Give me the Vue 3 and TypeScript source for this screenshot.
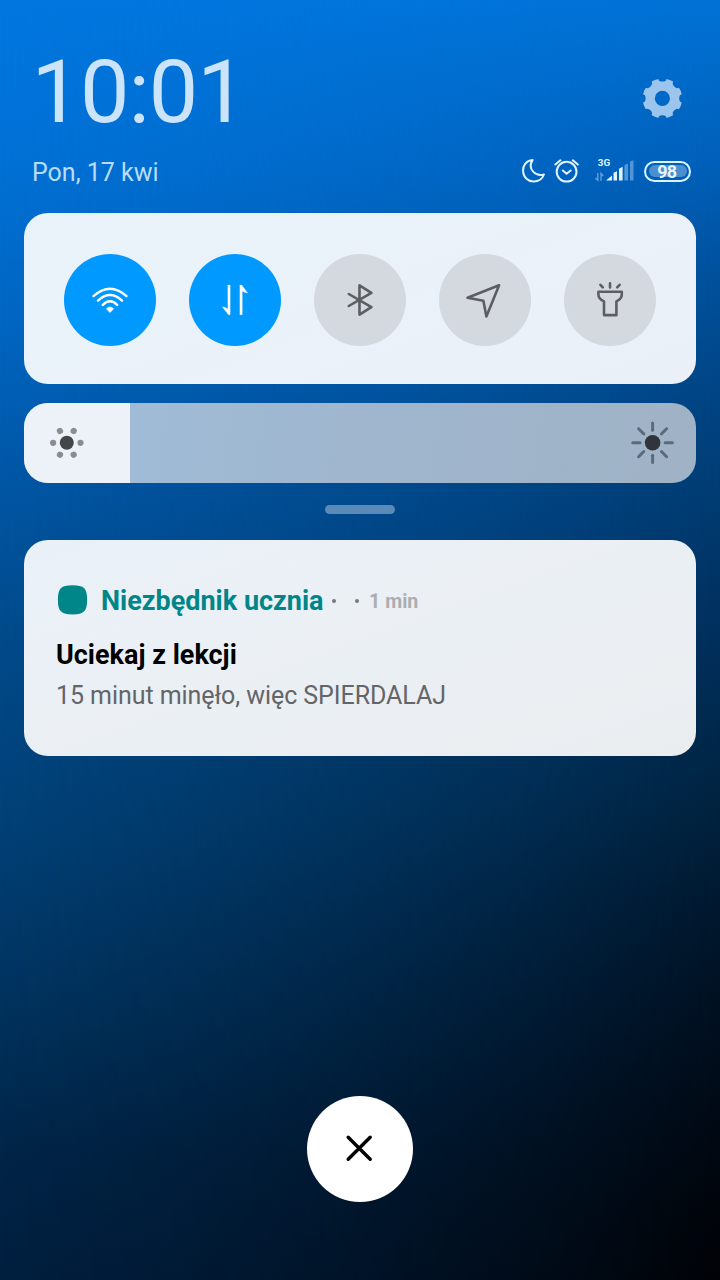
<script setup lang="ts">
type ToggleName = 'wifi' | 'data' | 'bluetooth' | 'location' | 'torch'

interface Toggle {
  name: ToggleName
  label: string
  active: boolean
}

const toggles: Toggle[] = [
  { name: 'wifi', label: 'Wi-Fi', active: true },
  { name: 'data', label: 'Dane mobilne', active: true },
  { name: 'bluetooth', label: 'Bluetooth', active: false },
  { name: 'location', label: 'Lokalizacja', active: false },
  { name: 'torch', label: 'Latarka', active: false },
]

const brightness = 15.8
const dots = [0, 60, 120, 180, 240, 300]
const rays = [0, 45, 90, 135, 180, 225, 270, 315]
</script>

<template>
  <main class="shade">
    <header class="header">
      <div class="top-row">
        <time class="clock">10:01</time>
        <svg class="gear" width="42" height="42" viewBox="-20.4 -20.4 42 42">
          <mask id="gear-mask">
            <circle r="19.8" fill="#fff" />
            <circle r="7.6" fill="#000" />
            <ellipse v-for="a in rays" :key="a" :transform="`rotate(${a})`" cy="-20" rx="4.1" ry="3.2" fill="#000" />
          </mask>
          <rect x="-21" y="-21" width="42" height="42" fill="#9bc5ed" mask="url(#gear-mask)" />
        </svg>
      </div>
      <div class="status-row">
        <span class="date">Pon, 17 kwi</span>
        <div class="status">
          <svg class="moon" width="24" height="26" viewBox="-.4 0 24 26">
            <path d="M11.2 2.1C4.4 2.7 1.4 8 1.7 13.2C2.1 19.5 6.7 23.6 12.3 23.5C17.3 23.4 21.1 20.6 22.5 16.5C18.7 17.7 14.8 16.8 12 13.9C8.8 10.6 8.6 6 11.2 2.1Z" />
          </svg>
          <svg class="alarm" width="26" height="26" viewBox="-.6 0 26 26">
            <circle cx="13" cy="13.7" r="9.9" />
            <path d="M1.8 6.5L6.8 2.3M19.2 2.3L24.2 6.5M9.2 12.5L13 15.8L17 12.5" />
          </svg>
          <svg class="signal" width="40" height="26" viewBox="0 0 40 26">
            <text x="3.8" y="8.2">3G</text>
            <path class="dim-line" d="M3.8 15V22.5L1.4 20M7 23V15.5L9.2 18" />
            <path d="M12 22.6L18 17.6V22.6ZM19.5 14.8L23 13.2V22.6H19.5ZM25 10.8L28.6 8.8V22.6H25Z" />
            <path class="dim" d="M30.4 7L34 5.4V22.6H30.4ZM36 3.6L39.5 2.2V22.6H36Z" />
          </svg>
          <span class="battery"><span>98</span></span>
        </div>
      </div>
    </header>

    <section class="toggles">
      <button v-for="t in toggles" :key="t.name" class="toggle" :class="{ active: t.active }" :aria-label="t.label">
        <svg width="46" height="46" viewBox="-23 -23 46 46">
          <g v-if="t.name === 'wifi'">
            <path class="wave" d="M-16.5-3.9Q0-18.8 16.5-3.9M-12 .7Q0-10.5 12 .7M-7.3 5Q0-2.6 7.3 5" />
            <path class="solid" d="M-3.8 8.8Q0 4.8 3.8 8.8L0 12.7Z" />
          </g>
          <path v-else-if="t.name === 'data'" class="solid" d="M-7.2-15H-4.8V14.8H-6.6L-12.8 6.8Q-9.8 6.8-7.2 9ZM4.9 14.8H7.3V-9Q9.8-7 12.7-7L6.7-15H4.9Z" />
          <path v-else-if="t.name === 'bluetooth'" d="M-11.2-6L11.4 7.2L-.5 14.6V-14.6L11.4-7.2L-11.2 6" />
          <path v-else-if="t.name === 'location'" d="M14.1-14.7L-17.5-2.3L-1.6 .7L1.4 16.5Z" />
          <g v-else>
            <path d="M-11.6-8.3H11.8V-5.5Q11.8-1.2 6.4 1.4V15.1H-6V1.4Q-11.6-1.2-11.6-5.5Z" />
            <path d="M0-16.6V-12.6M-9.6-15.2L-7.2-12.6M9.6-15.2L7.2-12.6" />
          </g>
        </svg>
      </button>
    </section>

    <section class="brightness">
      <div class="level" :style="{ width: `${brightness}%` }"></div>
      <svg class="sun-low" width="36" height="36" viewBox="-17.8 -17.8 36 36">
        <circle r="7" fill="#454648" />
        <circle v-for="a in dots" :key="a" :transform="`rotate(${a})`" cx="13.7" r="3.1" fill="#898c91" />
      </svg>
      <svg class="sun-high" width="44" height="44" viewBox="-21.6 -21.7 44 44">
        <circle r="7.8" fill="#30343d" />
        <path v-for="a in rays" :key="a" :transform="`rotate(${a})`" d="M12.5 0H19.8" stroke="#596b7c" stroke-width="3" stroke-linecap="round" />
      </svg>
    </section>

    <div class="handle"></div>

    <article class="notification">
      <div class="source">
        <svg class="app-icon" width="30" height="30" viewBox="-.5 1.2 30 30">
          <path d="M15 .4C26.5 .4 29.6 3.5 29.6 15S26.5 29.6 15 29.6S.4 26.5 .4 15S3.5 .4 15 .4Z" fill="#008689" />
        </svg>
        <span class="app-name">Niezbędnik ucznia</span>
        <i class="dot"></i>
        <i class="dot"></i>
        <span class="age">1 min</span>
      </div>
      <h1 class="title">Uciekaj z lekcji</h1>
      <p class="body">15 minut minęło, więc SPIERDALAJ</p>
    </article>

    <button class="close" aria-label="Wyczyść">
      <svg width="30" height="30" viewBox="-14.2 -14.2 30 30">
        <path d="M-11-11L11 11M11-11L-11 11" stroke="#000" stroke-width="3.4" stroke-linecap="round" />
      </svg>
    </button>
  </main>
</template>

<style>
body {
  margin: 0;
  background: #000;
}
</style>

<style scoped>
.shade {
  box-sizing: border-box;
  position: relative;
  isolation: isolate;
  width: 720px;
  height: 1280px;
  padding: 0 24px 78px;
  display: flex;
  flex-direction: column;
  overflow: hidden;
  font-family: Roboto, "Noto Sans", sans-serif;
  background: linear-gradient(180deg, #0077e0 0%, #0071d6 12.5%, #0066c2 25%, #0057a7 37%, #004a8a 50%, #003f74 66%, #00315b 80%, #002548 90%, #001f3f 100%);
}

/* Darkens the wallpaper towards the right edge. */
.shade::before {
  content: "";
  position: absolute;
  inset: 0;
  z-index: -1;
  background: linear-gradient(180deg, #0072d6 0%, #006bca 5%, #005fb8 13%, #00519d 21%, #004483 31%, #003a6f 40%, #003261 47%, #002a50 55%, #002340 62.5%, #001930 70%, #001122 78%, #000a16 86%, #00050b 94%, #000206 100%);
  mask-image: linear-gradient(90deg, transparent, rgb(0 0 0 / 0.19) 25%, rgb(0 0 0 / 0.42) 50%, rgb(0 0 0 / 0.69) 75%, #000);
}

button {
  border: 0;
  padding: 0;
}

svg {
  display: block;
  fill: none;
}

.header {
  height: 213px;
  flex: none;
}

.top-row {
  height: 155px;
  display: flex;
  justify-content: space-between;
  padding: 0 12px 0 7.5px;
}

.clock {
  margin-top: 40px;
  font-size: 88px;
  line-height: 104px;
  letter-spacing: -1px;
  color: #cce4f9;
}

.gear {
  margin-top: 78px;
}

.status-row {
  height: 36px;
  padding: 0 5px 0 8px;
  display: flex;
  justify-content: space-between;
  align-items: center;
}

.date {
  font-size: 25px;
  line-height: 36px;
  color: #b9dcf9;
}

.status {
  display: flex;
  align-items: center;
  margin-top: -4px;
}

.moon,
.alarm {
  stroke: #dff3ff;
  stroke-width: 2;
  stroke-linejoin: round;
  stroke-linecap: round;
}

.alarm {
  margin-left: 8px;
}

.signal {
  margin: 0 10px 0 15px;
  fill: #dff3ff;
}

.signal text {
  font-size: 9.8px;
  font-weight: 700;
}

.signal .dim {
  fill: #5095d7;
}

.signal .dim-line {
  fill: none;
  stroke: #65a4df;
  stroke-width: 1.3;
}

.battery {
  box-sizing: border-box;
  width: 47px;
  height: 21px;
  padding: 2.5px;
  border: 2px solid #dff3ff;
  border-radius: 11px;
}

.battery span {
  display: block;
  height: 12px;
  border-radius: 6px;
  background: #4b8fd0;
  font-size: 18px;
  font-weight: 700;
  line-height: 13px;
  letter-spacing: -0.8px;
  text-indent: -1.4px;
  text-align: center;
  color: #e6f6ff;
}

.toggles {
  flex: none;
  box-sizing: border-box;
  height: 171px;
  padding: 0 40px;
  display: flex;
  align-items: center;
  justify-content: space-between;
  border-radius: 24px;
  background: linear-gradient(160deg, #e9f3fa, #ebf0f8);
}

.toggle {
  width: 92px;
  height: 92px;
  margin-top: 3px;
  border-radius: 50%;
  display: grid;
  place-items: center;
  background: #d4d8df;
  color: #5c5e61;
}

.toggle.active {
  background: #0099ff;
  color: #fff;
}

.toggle path {
  stroke: currentColor;
  stroke-width: 2.6;
  stroke-linecap: round;
  stroke-linejoin: round;
}

.toggle .wave {
  stroke-width: 2.4;
}

.toggle .solid {
  fill: currentColor;
  stroke-width: 0.2;
}

.brightness {
  flex: none;
  position: relative;
  box-sizing: border-box;
  height: 80px;
  margin-top: 19px;
  padding: 0 21px 0 25px;
  display: flex;
  align-items: center;
  justify-content: space-between;
  overflow: hidden;
  border-radius: 24px;
  background: linear-gradient(100deg, #9fbedb, #9fb6ce 50%, #a0b2c5);
}

.level {
  position: absolute;
  inset: 0 auto 0 0;
  background: #ecf2f8;
}

.sun-low,
.sun-high {
  position: relative;
}

.handle {
  flex: none;
  align-self: center;
  width: 70px;
  height: 9px;
  margin: 22px 0 26px;
  border-radius: 5px;
  background: #598ab8;
}

.notification {
  flex: none;
  box-sizing: border-box;
  height: 216px;
  padding: 44px 32px 0;
  border-radius: 24px;
  background: linear-gradient(160deg, #e9f1f8, #ebf0f5 40%, #eaedf0);
}

.source {
  height: 34px;
  display: flex;
  align-items: center;
}

.app-icon {
  margin-left: 1px;
  overflow: visible;
}

.app-name {
  margin: 0 8.5px 0 14px;
  font-size: 27px;
  font-weight: 700;
  line-height: 34px;
  color: #008689;
}

.dot {
  width: 4px;
  height: 4px;
  margin-right: 19px;
  border-radius: 50%;
  background: #77797c;
}

.dot + .dot {
  margin-right: 10px;
}

.age {
  font-size: 19.6px;
  font-weight: 700;
  color: #abadb0;
}

.title {
  margin: 20px 0 0;
  font-size: 27px;
  font-weight: 700;
  line-height: 34px;
  color: #000;
}

.body {
  margin: 8px 0 0;
  font-size: 25px;
  line-height: 32px;
  letter-spacing: -0.07px;
  color: #636568;
}

.close {
  align-self: center;
  width: 106px;
  height: 106px;
  margin-top: auto;
  border-radius: 50%;
  display: grid;
  place-items: center;
  background: #fff;
}
</style>
